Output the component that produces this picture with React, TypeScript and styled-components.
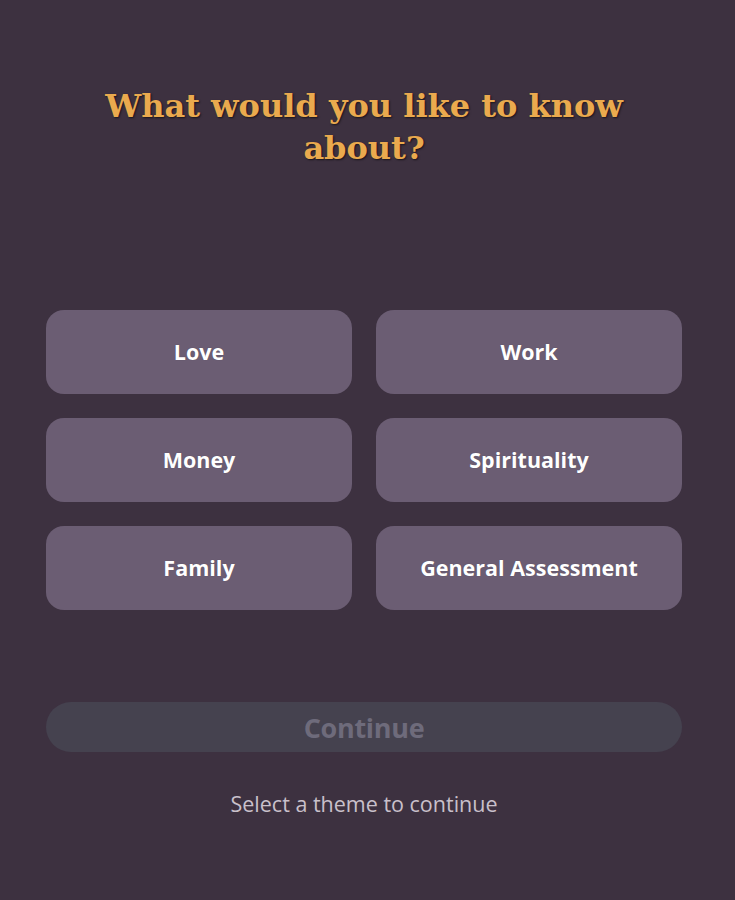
import React from "react";
import styled, { createGlobalStyle } from "styled-components";

const Global = createGlobalStyle`
  html, body { margin: 0; padding: 0; background: #3d3140; }
  body { min-height: 900px; }
`;

const Page = styled.div`
  width: 636px;
  margin-left: 46px;
  padding-top: 85px;
  display: flex;
  flex-direction: column;
  align-items: stretch;
`;

const Title = styled.h1`
  margin: 0;
  text-align: center;
  font-family: "DejaVu Serif", "Liberation Serif", serif;
  font-weight: 700;
  font-size: 32px;
  line-height: 42px;
  color: #eaaa4e;
  text-shadow: 1px 1px 2px rgba(0, 0, 0, 0.6);
  padding: 0 50px;
`;

const Grid = styled.div`
  margin-top: 141px;
  display: grid;
  grid-template-columns: 1fr 1fr;
  gap: 24px;
`;

const Theme = styled.button`
  height: 84px;
  padding: 0 0 1px;
  border: none;
  border-radius: 18px;
  background: #6b5d73;
  color: #ffffff;
  font-family: "Open Sans", Lato, sans-serif;
  font-weight: 700;
  font-size: 21.5px;
  letter-spacing: 0;
  cursor: pointer;
  text-shadow: 0 0 1px rgba(0, 0, 0, 0.2);
`;

const ContinueButton = styled.button`
  margin-top: 92px;
  height: 50px;
  border: none;
  border-radius: 25px;
  background: #45424f;
  color: #6e6b7b;
  font-family: "Open Sans", sans-serif;
  font-weight: 700;
  font-size: 27px;
  letter-spacing: -0.3px;
  cursor: not-allowed;
`;

const Hint = styled.p`
  margin: 37px 0 0;
  text-align: center;
  font-family: "Open Sans", sans-serif;
  font-size: 21.5px;
  color: #c9c0cb;
`;

const themes = ["Love", "Work", "Money", "Spirituality", "Family", "General Assessment"];

export default function App() {
  return (
    <>
      <Global />
      <Page>
        <Title>What would you like to know about?</Title>
        <Grid>
          {themes.map((t) => (
            <Theme key={t}>{t}</Theme>
          ))}
        </Grid>
        <ContinueButton disabled>Continue</ContinueButton>
        <Hint>Select a theme to continue</Hint>
      </Page>
    </>
  );
}
